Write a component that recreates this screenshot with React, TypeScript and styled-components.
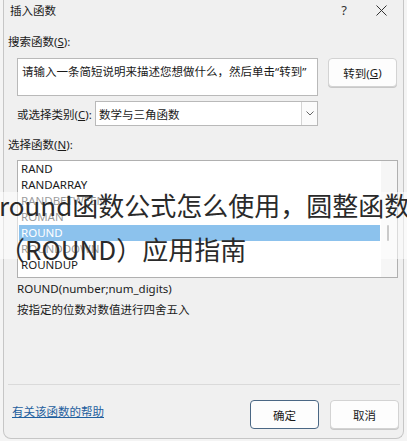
import React from 'react'
import styled, { createGlobalStyle } from 'styled-components'

const GlobalStyle = createGlobalStyle`
  html, body {
    margin: 0;
    padding: 0;
    background: #f4f4f4;
    overflow: hidden;
  }
  body {
    font-family: "Noto Sans", "Noto Sans CJK SC", sans-serif;
    font-size: 12px;
    color: #1a1a1a;
  }
`

const cjk = `"Noto Sans", "Noto Sans CJK SC", sans-serif`

const Page = styled.div`
  position: relative;
  width: 407px;
  height: 441px;
`

const Dialog = styled.div`
  box-sizing: border-box;
  width: 401px;
  height: 439px;
  margin-left: 3px;
  background: #f0f0f0;
  border: 1px solid #c6c6c6;
  border-top: none;
  border-radius: 0 0 8px 8px;
  display: flex;
  flex-direction: column;
`

const TitleBar = styled.div`
  height: 22px;
  display: flex;
  align-items: center;
  padding: 0 0 0 6px;
  font-family: ${cjk};
  font-size: 11.5px;
  color: #1a1a1a;
`

const TitleText = styled.div`
  flex: 1;
  margin-top: -2px;
`

const TitleButton = styled.div<{ $w: number }>`
  width: ${p => p.$w}px;
  display: flex;
  justify-content: center;
  align-items: center;
  font-family: "Noto Sans", sans-serif;
  font-size: 13px;
  color: #333;
  margin-top: -2px;
`

const Body = styled.div`
  flex: 1;
  display: flex;
  flex-direction: column;
  padding: 0 0 0 4px;
`

const Label = styled.div<{ $top: number }>`
  font-family: ${cjk};
  font-size: 11.5px;
  line-height: 16px;
  height: 16px;
  margin-top: ${p => p.$top}px;
  white-space: nowrap;
`

const Key = styled.span`
  text-decoration: underline;
`

const SearchRow = styled.div`
  display: flex;
  align-items: flex-start;
  margin: 8px 0 0 9px;
  gap: 10px;
`

const SearchBox = styled.div`
  box-sizing: border-box;
  width: 301px;
  height: 38px;
  background: #fff;
  border: 1px solid #b9b9b9;
  padding: 5px 4px;
  font-family: ${cjk};
  font-size: 11.5px;
  line-height: 16px;
  color: #1a1a1a;
  white-space: nowrap;
  overflow: hidden;
`

const Button = styled.div<{ $primary?: boolean }>`
  box-sizing: border-box;
  width: 69px;
  height: 29px;
  display: flex;
  align-items: center;
  justify-content: center;
  background: #fdfdfd;
  border: 1px solid ${p => (p.$primary ? '#4a6784' : '#d3d3d3')};
  border-radius: 4px;
  box-shadow: ${p => (p.$primary ? 'none' : '0 1px 0 #c8c8c8')};
  font-family: ${cjk};
  font-size: 11.5px;
  color: #1a1a1a;
`

const CategoryRow = styled.div`
  display: flex;
  align-items: center;
  margin: 5px 0 0 9px;
`

const CategoryLabel = styled.div`
  width: 78px;
  font-family: ${cjk};
  font-size: 11.5px;
  white-space: nowrap;
`

const Select = styled.div`
  box-sizing: border-box;
  width: 223px;
  height: 25px;
  display: flex;
  background: #fff;
  border: 1px solid #b9b9b9;
`

const SelectValue = styled.div`
  flex: 1;
  padding-left: 3px;
  display: flex;
  align-items: center;
  font-family: ${cjk};
  font-size: 11.5px;
`

const SelectArrow = styled.div`
  width: 15px;
  border-left: 1px solid #d4d4d4;
  display: flex;
  align-items: center;
  justify-content: center;
  background: #fbfbfb;
`

const ListBox = styled.div`
  box-sizing: border-box;
  width: 381px;
  height: 118px;
  margin: 7px 0 0 9px;
  background: #fff;
  border: 1px solid #b0b0b0;
  display: flex;
`

const Items = styled.div`
  flex: 1;
  padding: 0 1px;
`

const Item = styled.div<{ $selected?: boolean }>`
  height: 16px;
  line-height: 16px;
  padding-left: 2px;
  font-family: "Noto Sans", sans-serif;
  font-size: 11.5px;
  background: ${p => (p.$selected ? '#0078d7' : 'transparent')};
  color: ${p => (p.$selected ? '#fff' : '#1a1a1a')};
`

const ScrollTrack = styled.div`
  width: 16px;
  background: #f6f6f6;
  position: relative;
`

const ScrollThumb = styled.div`
  position: absolute;
  left: 6px;
  top: 64px;
  width: 2px;
  height: 16px;
  border-radius: 1px;
  background: #8a8a8a;
`

const Syntax = styled.div`
  margin: 3px 0 0 9px;
  font-family: "Noto Sans", sans-serif;
  font-size: 11.5px;
  line-height: 16px;
`

const Description = styled.div`
  margin: 5px 0 0 9px;
  font-family: ${cjk};
  font-size: 11.5px;
  line-height: 16px;
`

const Spacer = styled.div`
  flex: 1;
`

const Separator = styled.div`
  height: 1px;
  margin: 0 0 0 4px;
  width: 392px;
  background: #dadada;
`

const Footer = styled.div`
  display: flex;
  align-items: center;
  padding: 15px 4px 9px 8px;
  gap: 11px;
`

const HelpLink = styled.a`
  flex: 1;
  font-family: ${cjk};
  font-size: 11.5px;
  color: #1f5f9e;
  text-decoration: underline;
  margin-top: -8px;
`

const Overlay = styled.div`
  position: absolute;
  left: 0;
  top: 192px;
  width: 407px;
  height: 67px;
  background: rgba(255, 255, 255, 0.55);
`

const OverlayText = styled.div`
  margin-top: -9px;
  margin-left: -1px;
  font-family: "Noto Sans CJK SC", sans-serif;
  font-size: 26px;
  line-height: 44px;
  color: #2a2a2a;
  white-space: nowrap;
`

const functions = ['RAND', 'RANDARRAY', 'RANDBETWEEN', 'ROMAN', 'ROUND', 'ROUNDDOWN', 'ROUNDUP']

const App = () => {
  return (
    <Page>
      <GlobalStyle />
      <Dialog>
        <TitleBar>
          <TitleText>插入函数</TitleText>
          <TitleButton $w={30}>?</TitleButton>
          <TitleButton $w={44}>
            <svg width="11" height="11" viewBox="0 0 11 11">
              <path d="M0.5 0.5 L10.5 10.5 M10.5 0.5 L0.5 10.5" stroke="#333" strokeWidth="1" />
            </svg>
          </TitleButton>
        </TitleBar>
        <Body>
          <Label $top={12}>
            搜索函数(<Key>S</Key>):
          </Label>
          <SearchRow>
            <SearchBox>请输入一条简短说明来描述您想做什么，然后单击“转到”</SearchBox>
            <Button>
              转到(<Key>G</Key>)
            </Button>
          </SearchRow>
          <CategoryRow>
            <CategoryLabel>
              或选择类别(<Key>C</Key>):
            </CategoryLabel>
            <Select>
              <SelectValue>数学与三角函数</SelectValue>
              <SelectArrow>
                <svg width="8" height="5" viewBox="0 0 8 5">
                  <path d="M0.5 0.5 L4 4 L7.5 0.5" stroke="#666" strokeWidth="1" fill="none" />
                </svg>
              </SelectArrow>
            </Select>
          </CategoryRow>
          <Label $top={11}>
            选择函数(<Key>N</Key>):
          </Label>
          <ListBox>
            <Items>
              {functions.map(f => (
                <Item key={f} $selected={f === 'ROUND'}>
                  {f}
                </Item>
              ))}
            </Items>
            <ScrollTrack>
              <ScrollThumb />
            </ScrollTrack>
          </ListBox>
          <Syntax>ROUND(number;num_digits)</Syntax>
          <Description>按指定的位数对数值进行四舍五入</Description>
          <Spacer />
        </Body>
        <Separator />
        <Footer>
          <HelpLink>有关该函数的帮助</HelpLink>
          <Button $primary>确定</Button>
          <Button>取消</Button>
        </Footer>
      </Dialog>
      <Overlay>
        <OverlayText>
          round函数公式怎么使用，圆整函数
          <br />
          （ROUND）应用指南
        </OverlayText>
      </Overlay>
    </Page>
  )
}

export default App
